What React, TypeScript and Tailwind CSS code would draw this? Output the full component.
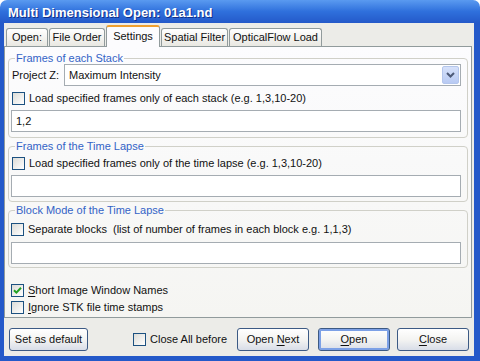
import React from 'react';

function Check({ checked = false }: { checked?: boolean }) {
    return (
        <span className="flex h-[13px] w-[13px] shrink-0 items-center justify-center border border-[#1c5180] bg-linear-to-br from-[#dcdcd7] to-white">
            {checked && (
                <svg width="9" height="9" viewBox="0 0 9 9">
                    <path d="M1 4.2 L3.4 6.6 L8 1.8" stroke="#21a121" strokeWidth="2" fill="none" />
                </svg>
            )}
        </span>
    );
}

function CheckRow({ label, checked, className }: { label: React.ReactNode; checked?: boolean; className: string }) {
    return (
        <div className={`flex items-center gap-[4px] ${className}`}>
            <Check checked={checked} />
            <span className="whitespace-pre leading-[13px]">{label}</span>
        </div>
    );
}

function TextBox({ value = '' }: { value?: string }) {
    return (
        <div className="flex h-[22px] items-center border border-[#a5acb2] bg-white pl-[4px] leading-[13px]">
            {value}
        </div>
    );
}

function Group({ title, children, className = '' }: { title: string; children: React.ReactNode; className?: string }) {
    return (
        <fieldset className={`rounded-[4px] border border-[#d0d0c8] pl-[2px] pr-[6px] ${className}`}>
            <legend className="ml-[4px] px-[1px] leading-[12px] text-[#3363c6]">{title}</legend>
            {children}
        </fieldset>
    );
}

function Tab({ label, width, active }: { label: string; width: string; active?: boolean }) {
    if (active) {
        return (
            <div
                className={`relative z-10 -mb-[1px] flex h-[22px] items-center justify-center rounded-t-[3px] border-x border-t-2 border-x-[#919b9c] border-t-[#f0a030] bg-[#fcfcfe] pb-[2px] ${width}`}
            >
                {label}
            </div>
        );
    }
    return (
        <div
            className={`flex h-[18px] items-center justify-center rounded-t-[3px] border border-b-0 border-[#919b9c] bg-linear-to-b from-white to-[#e9e8e2] ${width}`}
        >
            {label}
        </div>
    );
}

function Button({ children, width, primary }: { children: React.ReactNode; width: string; primary?: boolean }) {
    return (
        <div
            className={`flex h-[23px] items-center justify-center rounded-[3px] border border-[#3c5a84] bg-linear-to-b from-white via-[#f4f4f2] to-[#d8dde8] ${width} ${
                primary ? 'shadow-[inset_0_0_0_2px_#7ca0e6]' : ''
            }`}
        >
            {children}
        </div>
    );
}

export default function App() {
    return (
        <div className="flex h-[361px] w-[480px] flex-col bg-white font-['Liberation_Sans',Arial,sans-serif] text-[11px] text-[#111]">
            <div className="h-[23px] shrink-0 rounded-t-[7px] bg-linear-to-b from-[#5a9af0] via-[#2f70dc] to-[#2459c9] pl-[8px] pt-[5px] text-[13px] leading-[15px] font-bold text-white [text-shadow:1px_1px_#10308a]">
                Multi Dimensional Open: 01a1.nd
            </div>
            <div className="flex flex-1 flex-col border-b-[5px] border-l-4 border-r-[6px] border-[#2459c9] bg-[#ecece8]">
                <div className="flex h-[23px] items-end gap-[1px] pl-[2px]">
                    <Tab label="Open:" width="w-[42px]" />
                    <Tab label="File Order" width="w-[56px]" />
                    <Tab label="Settings" width="w-[54px]" active />
                    <Tab label="Spatial Filter" width="w-[67px]" />
                    <Tab label="OpticalFlow Load" width="w-[93px]" />
                </div>
                <div className="flex h-[272px] w-[468px] flex-col border border-[#919b9c] bg-linear-to-b from-[#fcfcfe] to-[#f5f5f2] px-[3px] pt-[5px]">
                    <Group title="Frames of each Stack" className="pb-[5px]">
                        <div className="flex h-[22px] items-center">
                            <span className="ml-[1px] w-[52px] leading-[13px]">Project Z:</span>
                            <div className="flex h-[22px] flex-1 items-center border border-[#a5acb2] bg-white pl-[4px]">
                                <span className="flex-1 leading-[13px]">Maximum Intensity</span>
                                <div className="mr-[1px] flex h-[18px] w-[17px] items-center justify-center rounded-[2px] border border-[#b4c6ec] bg-linear-to-b from-[#d6e1fa] to-[#b8caf3]">
                                    <svg width="9" height="6" viewBox="0 0 9 6">
                                        <path d="M1 1 L4.5 4.5 L8 1" stroke="#4d5a78" strokeWidth="2" fill="none" />
                                    </svg>
                                </div>
                            </div>
                        </div>
                        <CheckRow
                            className="h-[24px] pl-[1px]"
                            label="Load specified frames only of each stack (e.g. 1,3,10-20)"
                        />
                        <TextBox value="1,2" />
                    </Group>
                    <Group title="Frames of the Time Lapse" className="mt-[2px] pb-[4px]">
                        <CheckRow
                            className="h-[23px] pl-[1px]"
                            label="Load specified frames only of the time lapse (e.g. 1,3,10-20)"
                        />
                        <TextBox />
                    </Group>
                    <Group title="Block Mode of the Time Lapse" className="mt-[2px] pb-[3px]">
                        <CheckRow
                            className="h-[26px] pl-[0px]"
                            label="Separate blocks  (list of number of frames in each block e.g. 1,1,3)"
                        />
                        <TextBox />
                    </Group>
                    <CheckRow
                        className="mt-[14px] h-[17px] pl-[3px]"
                        checked
                        label={
                            <>
                                <u className="underline-offset-2">S</u>hort Image Window Names
                            </>
                        }
                    />
                    <CheckRow
                        className="h-[16px] pl-[3px]"
                        label={
                            <>
                                <u className="underline-offset-2">I</u>gnore STK file time stamps
                            </>
                        }
                    />
                </div>
                <div className="flex items-center pl-[5px] pr-[5px] pt-[10px]">
                    <Button width="w-[79px]">Set as default</Button>
                    <div className="ml-[45px] flex items-center gap-[4px]">
                        <Check />
                        <span className="leading-[13px]">Close All before</span>
                    </div>
                    <div className="ml-auto flex gap-[9px]">
                        <Button width="w-[72px]">
                            <span>
                                Open <u className="underline-offset-2">N</u>ext
                            </span>
                        </Button>
                        <div className="flex gap-[7px]">
                            <Button width="w-[72px]" primary>
                                <span>
                                    <u className="underline-offset-2">O</u>pen
                                </span>
                            </Button>
                            <Button width="w-[72px]">
                                <span>
                                    <u className="underline-offset-2">C</u>lose
                                </span>
                            </Button>
                        </div>
                    </div>
                </div>
            </div>
        </div>
    );
}
